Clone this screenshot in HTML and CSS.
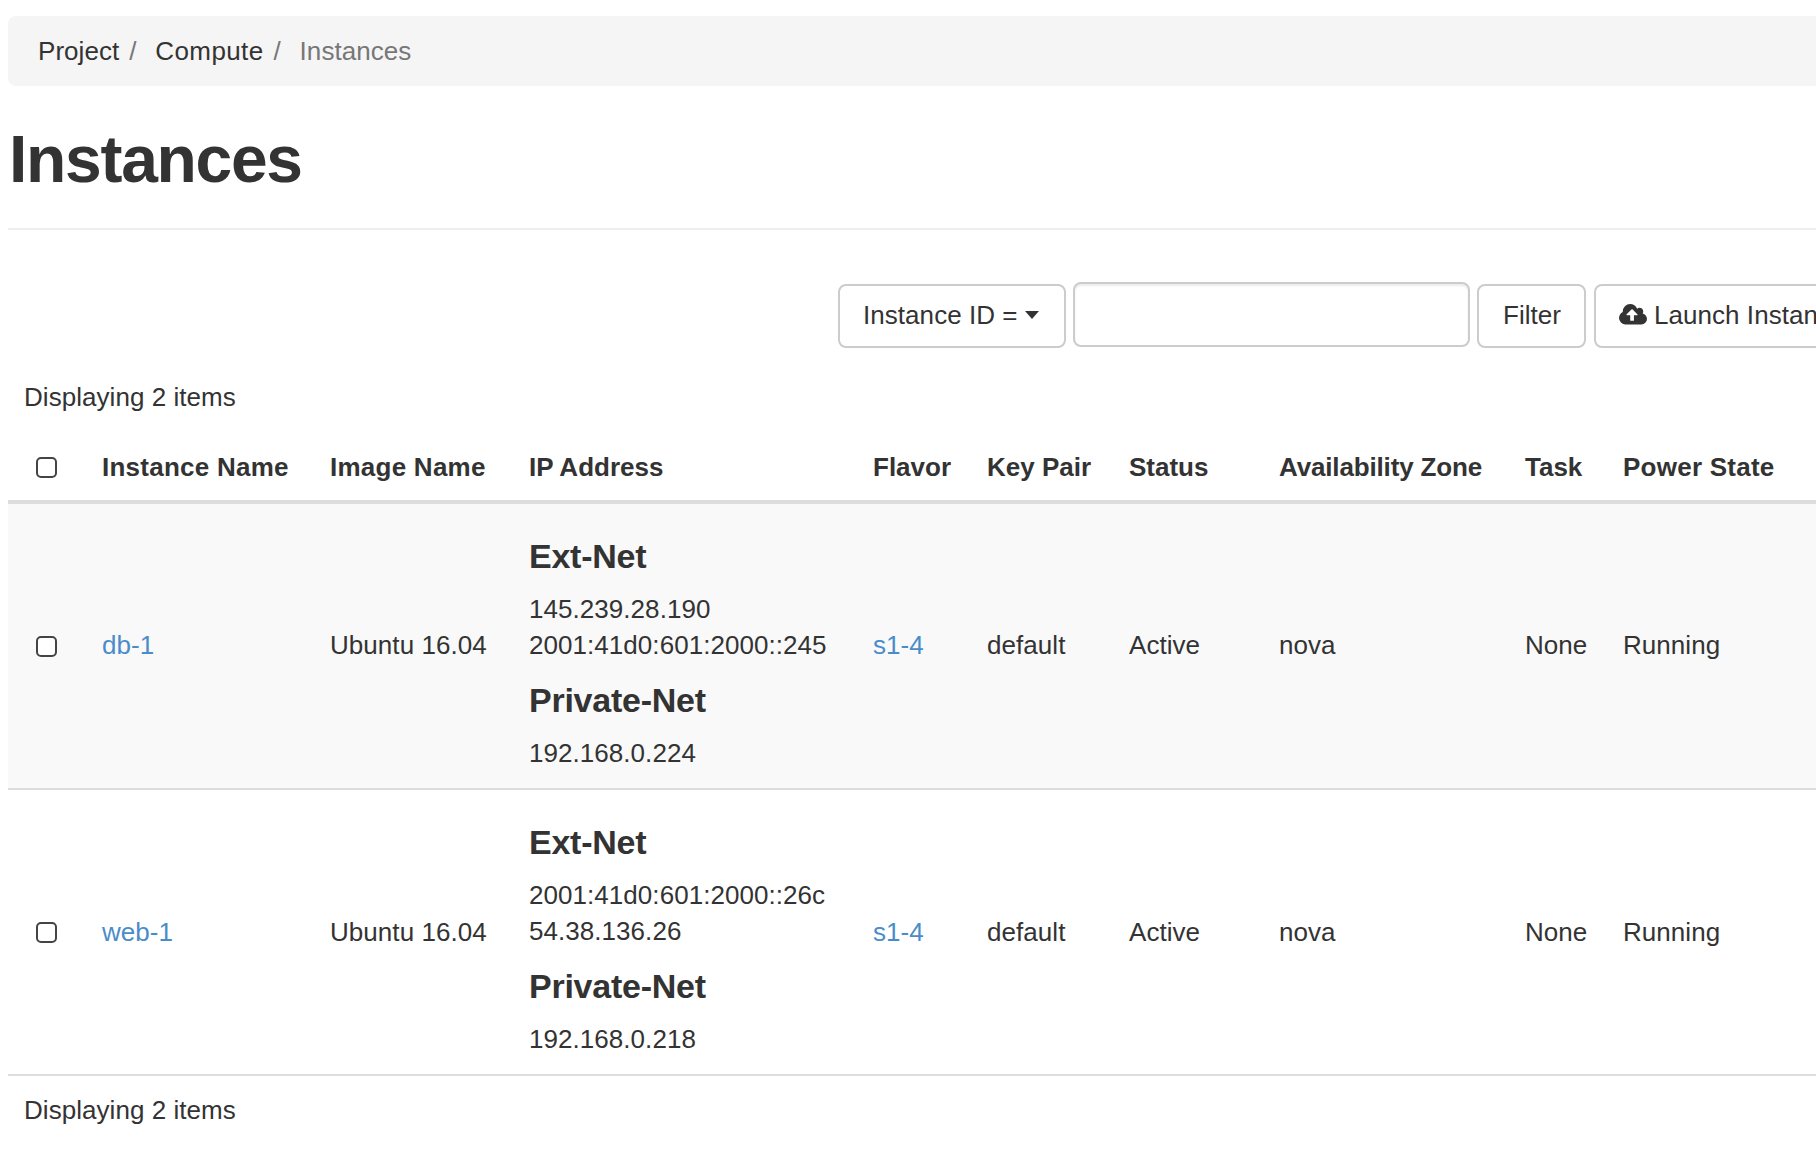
FILE: index.html
```html
<!DOCTYPE html>
<html lang="en">
<head>
<meta charset="utf-8">
<title>Instances</title>
<link rel="stylesheet" href="styles.css">
</head>
<body>
<main class="page">
  <nav>
    <ol class="breadcrumb">
      <li><a href="#">Project</a></li>
      <li class="mid"><a href="#">Compute</a></li>
      <li class="active">Instances</li>
    </ol>
  </nav>
  <header class="page-header"><h1>Instances</h1></header>
  <div class="toolbar">
    <button class="btn btn-select" type="button">Instance ID =<span class="caret"></span></button>
    <input class="search" type="text" aria-label="Filter value">
    <button class="btn btn-filter" type="button">Filter</button>
    <button class="btn btn-launch" type="button"><svg class="cloud" viewBox="0 128 1920 1408" aria-hidden="true"><path fill="currentColor" d="M1280 864q0-14-9-23l-352-352q-9-9-23-9t-23 9l-351 351q-10 12-10 24 0 14 9 23t23 9h224v352q0 13 9.5 22.5t22.5 9.5h192q13 0 22.5-9.5t9.5-22.5v-352h224q13 0 22.5-9.5t9.5-22.5zm640 288q0 159-112.5 271.5t-271.5 112.5h-1088q-185 0-316.5-131.5t-131.5-316.5q0-130 70-240t188-165q-2-30-2-43 0-212 150-362t362-150q156 0 285.5 87t188.5 231q71-62 166-62 106 0 181 75t75 181q0 76-41 138 130 31 213.5 135.5t83.5 238.5z"/></svg>Launch Instance</button>
  </div>
  <p class="count">Displaying 2 items</p>
  <table class="instances">
    <colgroup>
      <col class="c-check"><col class="c-name"><col class="c-image"><col class="c-ip"><col class="c-flavor"><col class="c-key"><col class="c-status"><col class="c-zone"><col class="c-task"><col class="c-power">
    </colgroup>
    <thead>
      <tr>
        <th><input class="check" type="checkbox" aria-label="Select all"></th>
        <th class="wide">Instance Name</th><th class="wide">Image Name</th><th>IP Address</th><th>Flavor</th><th>Key Pair</th><th>Status</th><th class="narrow">Availability Zone</th><th>Task</th><th class="wide">Power State</th>
      </tr>
    </thead>
    <tbody>
      <tr class="odd">
        <td><input class="check" type="checkbox" aria-label="Select db-1"></td>
        <td><a class="link" href="#">db-1</a></td>
        <td>Ubuntu 16.04</td>
        <td class="ip">
          <h4>Ext-Net</h4>
          <ul><li>145.239.28.190</li><li>2001:41d0:601:2000::245</li></ul>
          <h4>Private-Net</h4>
          <ul><li>192.168.0.224</li></ul>
        </td>
        <td><a class="link" href="#">s1-4</a></td>
        <td>default</td><td>Active</td><td>nova</td><td>None</td><td>Running</td>
      </tr>
      <tr>
        <td><input class="check" type="checkbox" aria-label="Select web-1"></td>
        <td><a class="link" href="#">web-1</a></td>
        <td>Ubuntu 16.04</td>
        <td class="ip">
          <h4>Ext-Net</h4>
          <ul><li>2001:41d0:601:2000::26c</li><li>54.38.136.26</li></ul>
          <h4>Private-Net</h4>
          <ul><li>192.168.0.218</li></ul>
        </td>
        <td><a class="link" href="#">s1-4</a></td>
        <td>default</td><td>Active</td><td>nova</td><td>None</td><td>Running</td>
      </tr>
    </tbody>
  </table>
  <p class="count count-bottom">Displaying 2 items</p>
</main>
</body>
</html>
```
FILE: styles.css
```css
* { box-sizing: border-box; }
html, body { height: 100%; }
body {
  margin: 0;
  overflow: hidden;
  background: #fff;
  color: #333;
  font: 26px/36px "Liberation Sans", Arial, sans-serif;
  letter-spacing: 0.05px;
}
a { color: inherit; text-decoration: none; }
.page { padding: 16px 0 0 8px; }

.breadcrumb {
  display: flex;
  align-items: center;
  height: 70px;
  margin: 0;
  padding: 0 30px;
  list-style: none;
  background: #f5f5f5;
  border-radius: 8px 0 0 8px;
}
.breadcrumb li { display: flex; }
.breadcrumb .mid a { letter-spacing: 0.4px; }
.breadcrumb .active { color: #777; }
.breadcrumb li + li::before {
  content: "/";
  width: 16px;
  margin: 0 10px;
  color: #777;
}

.page-header {
  height: 144px;
  padding-top: 36px;
  border-bottom: 2px solid #eee;
}
h1 {
  margin: 0 0 0 1px;
  font-size: 66px;
  line-height: 74px;
  font-weight: 700;
  letter-spacing: -1.3px;
}

.toolbar {
  display: flex;
  height: 66px;
  margin: 52px 0 0 830px;
  white-space: nowrap;
}
.btn {
  flex: none;
  display: flex;
  align-items: center;
  height: 64px;
  margin-top: 2px;
  padding: 0 0 2px 23px;
  border: 2px solid #ccc;
  border-radius: 8px;
  background: #fff;
  color: #333;
  font: inherit;
  letter-spacing: inherit;
}
.btn-select { width: 228px; }
.btn-filter { width: 109px; margin-right: 8px; padding-left: 24px; }
.btn-launch { width: 260px; }
.caret {
  margin-left: 7px;
  border: 7.5px solid transparent;
  border-top: 8px solid #333;
  border-bottom: 0;
}
.search {
  flex: none;
  width: 397px;
  height: 65px;
  margin: 0 7px;
  border: 2px solid #ccc;
  border-radius: 8px;
  box-shadow: inset 0 2px 2px rgba(0, 0, 0, 0.075);
}
.cloud { width: 28px; height: 20.5px; margin: 0 7px 1px 0; }

.count { margin: 31px 0 0; padding-left: 16px; }

.instances {
  width: 1808px;
  margin-top: 17px;
  table-layout: fixed;
  border-collapse: separate;
  border-spacing: 0;
}
.c-check { width: 78px; }
.c-name { width: 228px; }
.c-image { width: 199px; }
.c-ip { width: 344px; }
.c-flavor { width: 114px; }
.c-key { width: 142px; }
.c-status { width: 150px; }
.c-zone { width: 246px; }
.c-task { width: 98px; }
.c-power { width: 209px; }

th, td {
  padding: 0 0 0 16px;
  text-align: left;
  vertical-align: middle;
  white-space: nowrap;
}
th {
  height: 72px;
  padding-top: 2px;
  border-bottom: 4px solid #ddd;
  letter-spacing: 0;
}
th.wide { letter-spacing: 0.25px; }
th.narrow { letter-spacing: -0.15px; }
td { height: 286px; border-bottom: 2px solid #ddd; }
.odd td { background: #f9f9f9; padding-bottom: 2px; }
.ip, .odd .ip { padding-top: 33px; padding-bottom: 0; vertical-align: top; }
.ip h4 {
  margin: 0 0 16px;
  font-size: 34px;
  line-height: 38px;
  font-weight: 700;
  letter-spacing: -0.25px;
}
.ip ul { margin: 0 0 18px; padding: 0; list-style: none; }
.ip ul:last-child { margin: 0; }
.link { color: #4a8cca; }

.check {
  display: block;
  appearance: none;
  width: 21px;
  height: 21px;
  margin: 1px 0 0 12px;
  border: 2px solid #444;
  border-radius: 5px;
  background: #fff;
}
.odd .check { margin-top: 2px; }
.count-bottom { margin-top: 16px; }
```
